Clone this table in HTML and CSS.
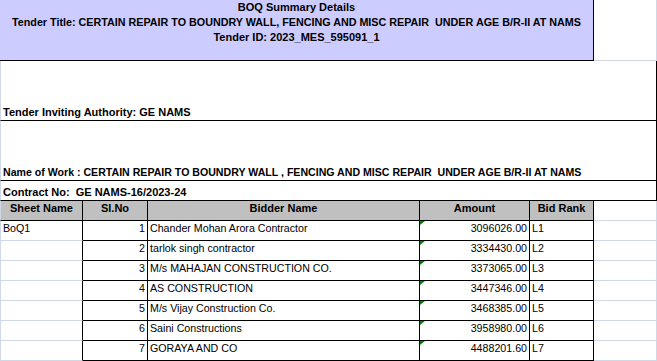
FILE: index.html
```html
<!DOCTYPE html>
<html>
<head>
<meta charset="utf-8">
<title>BOQ Summary Details</title>
<link rel="stylesheet" href="styles.css">
</head>
<body>
<div class="sheet">
  <div class="cell title">BOQ Summary Details<br><span class="long">Tender Title: CERTAIN REPAIR TO BOUNDRY WALL, FENCING AND MISC REPAIR&nbsp; UNDER AGE B/R-II AT NAMS</span><br>Tender ID: 2023_MES_595091_1</div>
  <div class="cell blank title-side"></div>

  <div class="cell box tall">Tender Inviting Authority: GE NAMS</div>
  <div class="cell box tall long">Name of Work : CERTAIN REPAIR TO BOUNDRY WALL , FENCING AND MISC REPAIR&nbsp; UNDER AGE B/R-II AT NAMS</div>
  <div class="cell box">Contract No:&nbsp; GE NAMS-16/2023-24</div>

  <div class="cell head first">Sheet Name</div>
  <div class="cell head">Sl.No</div>
  <div class="cell head">Bidder Name</div>
  <div class="cell head">Amount</div>
  <div class="cell head">Bid Rank</div>
  <div class="cell blank"></div>

  <div class="cell name first">BoQ1</div>
  <div class="cell data num">1</div>
  <div class="cell data">Chander Mohan Arora Contractor</div>
  <div class="cell data num amt">3096026.00</div>
  <div class="cell data">L1</div>
  <div class="cell blank"></div>

  <div class="cell name first"></div>
  <div class="cell data num">2</div>
  <div class="cell data">tarlok singh contractor</div>
  <div class="cell data num amt">3334430.00</div>
  <div class="cell data">L2</div>
  <div class="cell blank"></div>

  <div class="cell name first"></div>
  <div class="cell data num">3</div>
  <div class="cell data">M/s MAHAJAN CONSTRUCTION CO.</div>
  <div class="cell data num amt">3373065.00</div>
  <div class="cell data">L3</div>
  <div class="cell blank"></div>

  <div class="cell name first"></div>
  <div class="cell data num">4</div>
  <div class="cell data">AS CONSTRUCTION</div>
  <div class="cell data num amt">3447346.00</div>
  <div class="cell data">L4</div>
  <div class="cell blank"></div>

  <div class="cell name first"></div>
  <div class="cell data num">5</div>
  <div class="cell data">M/s Vijay Construction Co.</div>
  <div class="cell data num amt">3468385.00</div>
  <div class="cell data">L5</div>
  <div class="cell blank"></div>

  <div class="cell name first"></div>
  <div class="cell data num">6</div>
  <div class="cell data">Saini Constructions</div>
  <div class="cell data num amt">3958980.00</div>
  <div class="cell data">L6</div>
  <div class="cell blank"></div>

  <div class="cell name first"></div>
  <div class="cell data num">7</div>
  <div class="cell data">GORAYA AND CO</div>
  <div class="cell data num amt">4488201.60</div>
  <div class="cell data">L7</div>
  <div class="cell blank"></div>
</div>
</body>
</html>
```

FILE: styles.css
```css
html, body {
  margin: 0;
  padding: 0;
  background: #ffffff;
}

body {
  font-family: "Liberation Sans", Arial, sans-serif;
  color: #000000;
  overflow: hidden;
}

.sheet {
  display: grid;
  grid-template-columns: 83px 65px 272px 110px 64px 63px;
  grid-template-rows: 61px 60px 60px 20px 20px repeat(7, 20px);
  width: 657px;
}

.cell {
  box-sizing: border-box;
  border-right: 1px solid #000;
  border-bottom: 1px solid #000;
  white-space: nowrap;
  overflow: hidden;
  font-size: 10.67px;
  line-height: 15px;
}

.title {
  grid-column: 1 / 6;
  background: #ccccff;
  font-weight: bold;
  font-size: 11px;
  text-align: center;
}

.title .long {
  font-size: 10.75px;
}

.title-side {
  border-bottom: 1px solid #000;
  border-right: 1px solid #d0d7e5;
}

.box {
  grid-column: 1 / -1;
  border-left: 1px solid #d0d7e5;
  font-weight: bold;
  font-size: 11px;
  display: flex;
  align-items: flex-end;
  padding-left: 2px;
}

.box.long {
  font-size: 10.6px;
}

.head {
  background: #c0c0c0;
  font-weight: bold;
  font-size: 11px;
  text-align: center;
}

.first {
  border-left: 1px solid #d0d7e5;
}

.name {
  border-bottom: 1px solid #d0d7e5;
  padding-left: 2px;
}

.data {
  padding-left: 2px;
}

.num {
  text-align: right;
  padding-left: 0;
  padding-right: 2px;
}

.amt {
  position: relative;
}

.amt::before {
  content: "";
  position: absolute;
  top: 0;
  left: 0;
  width: 0;
  height: 0;
  border-top: 4px solid #008000;
  border-right: 5px solid transparent;
}

.blank {
  border-right: 1px solid #d0d7e5;
  border-bottom: 1px solid #d0d7e5;
}
```
